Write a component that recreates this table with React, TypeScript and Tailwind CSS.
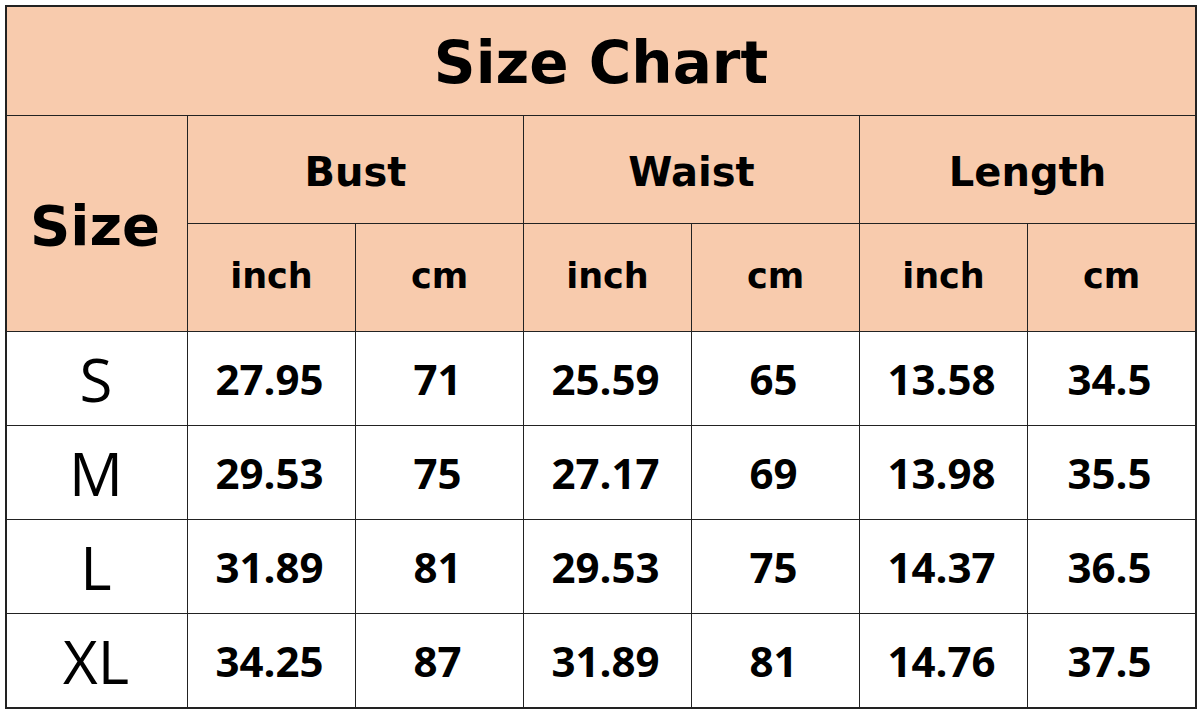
import { Fragment } from "react";

// Size chart data
const rows = [
  { size: "S", vals: ["27.95", "71", "25.59", "65", "13.58", "34.5"] },
  { size: "M", vals: ["29.53", "75", "27.17", "69", "13.98", "35.5"] },
  { size: "L", vals: ["31.89", "81", "29.53", "75", "14.37", "36.5"] },
  { size: "XL", vals: ["34.25", "87", "31.89", "81", "14.76", "37.5"] },
];

export default function App() {
  return (
    <div className="w-[1200px] h-[715px] bg-white pt-[5px] pl-[5px]">
      <div className="w-fit border-2 border-[#222]">
        <div className="grid grid-cols-[180px_repeat(6,167px)] grid-rows-[108px_107px_107px_repeat(4,93px)] gap-px bg-[#222] text-black">
          {/* title */}
          <div className="col-span-7 bg-[#f8cbad] flex items-center justify-center font-['Comic_Sans_MS','DejaVu_Sans',sans-serif] text-[58px] font-bold pt-[4px]">
            Size Chart
          </div>

          {/* header */}
          <div className="row-span-2 bg-[#f8cbad] flex items-center justify-center font-['Comic_Sans_MS','DejaVu_Sans',sans-serif] text-[56px] font-bold pt-[4px] pr-[4px]">
            Size
          </div>
          {["Bust", "Waist", "Length"].map((h) => (
            <div key={h} className="col-span-2 bg-[#f8cbad] flex items-center justify-center font-['Comic_Sans_MS','DejaVu_Sans',sans-serif] text-[40px] font-bold pt-[4px]">
              {h}
            </div>
          ))}
          {["inch", "cm", "inch", "cm", "inch", "cm"].map((u, i) => (
            <div key={i} className="bg-[#f8cbad] flex items-center justify-center font-['Comic_Sans_MS','DejaVu_Sans',sans-serif] text-[35px] font-bold pb-[2px]">
              {u}
            </div>
          ))}

          {/* data */}
          {rows.map((r) => (
            <Fragment key={r.size}>
              <div className="bg-white flex items-center justify-center font-['Open_Sans','Noto_Sans',sans-serif] text-[60px] pr-[2px]">
                {r.size}
              </div>
              {r.vals.map((v, i) => (
                <div key={i} className="bg-white flex items-center justify-center font-['Open_Sans','Noto_Sans',sans-serif] text-[42px] font-bold pr-[4px]">
                  {v}
                </div>
              ))}
            </Fragment>
          ))}
        </div>
      </div>
    </div>
  );
}
